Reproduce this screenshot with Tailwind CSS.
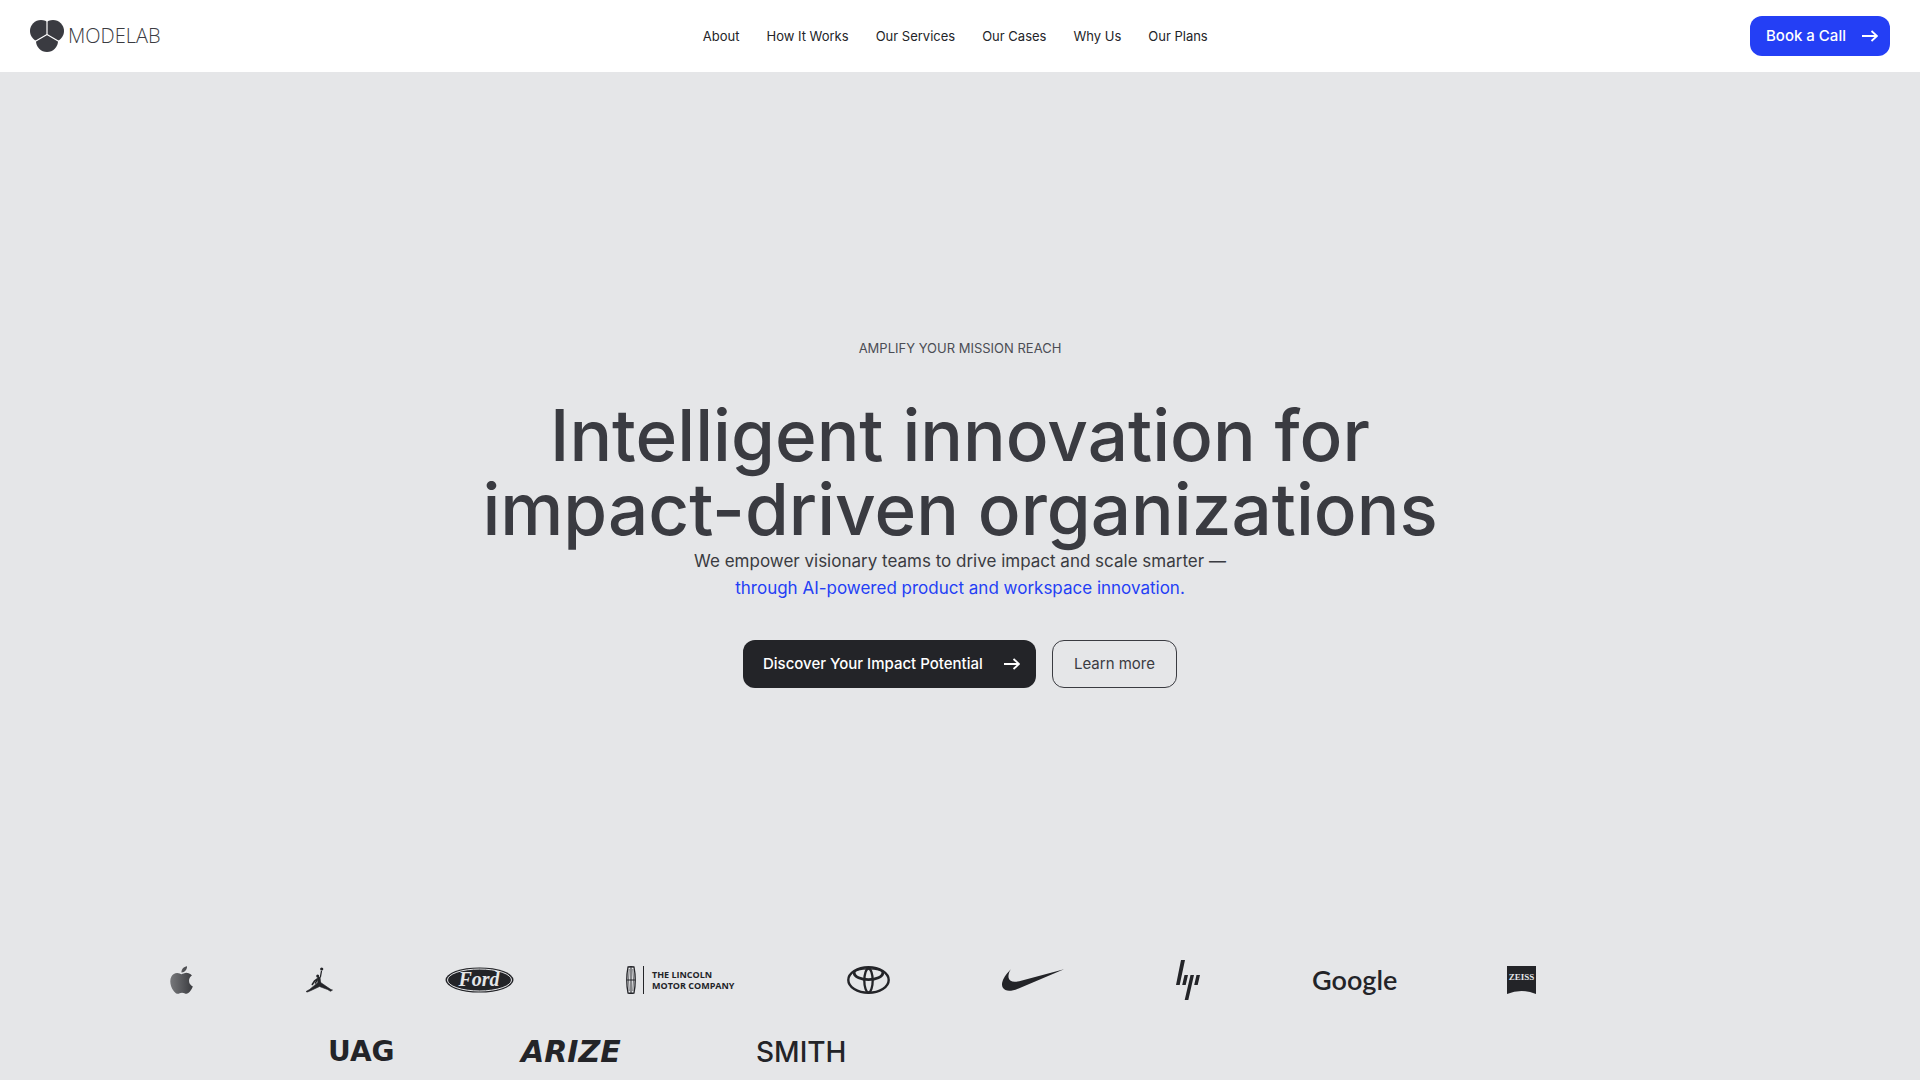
<!DOCTYPE html>
<html lang="en">
<head>
<meta charset="utf-8">
<meta name="viewport" content="width=device-width, initial-scale=1">
<title>Modelab</title>
<script src="https://cdn.jsdelivr.net/npm/@tailwindcss/browser@4"></script>
</head>
<body class="flex min-h-screen flex-col bg-[#e5e6e8] font-['Inter',sans-serif] text-[#232428]">

<header class="flex h-[72px] items-center justify-between bg-white px-[30px]">
  <a href="#" class="flex items-center gap-1 text-[#3a3b41]" aria-label="Modelab home">
    <svg class="h-8 w-[34px]" viewBox="0 0 34 32" fill="currentColor" aria-hidden="true">
      <circle cx="11" cy="11" r="11"/><circle cx="23" cy="11" r="11"/><circle cx="17" cy="21" r="11"/>
      <path d="M17 0V14.500M17 14.500L5 21.500M17 14.500L29 21.500" stroke="#fff" stroke-width="1.200" fill="none"/>
    </svg>
    <span class="font-['Open_Sans',sans-serif] text-[20px] leading-8 font-light">MODELAB</span>
  </a>
  <nav class="flex items-center gap-[27px] text-[13px] leading-5">
    <a href="#about">About</a>
    <a href="#how">How It Works</a>
    <a href="#services">Our Services</a>
    <a href="#cases">Our Cases</a>
    <a href="#why">Why Us</a>
    <a href="#plans">Our Plans</a>
  </nav>
  <button type="button" class="flex h-10 w-[140px] items-center justify-between rounded-xl bg-[#243ff5] pr-3 pl-4 text-[15px] font-medium text-white">
    Book a Call
    <svg class="h-3 w-4" viewBox="0 0 16 12" fill="none" stroke="currentColor" stroke-width="1.800" aria-hidden="true"><path d="M0 6H15M9.500 1L15 6L9.500 11"/></svg>
  </button>
</header>

<main class="flex flex-1 flex-col">
  <section class="flex flex-1 flex-col items-center justify-center text-center">
    <p class="text-[13px] leading-5 text-[#4b4d54]">AMPLIFY YOUR MISSION REACH</p>
    <h1 class="mt-10 text-[71px] leading-[74px] font-medium text-[#3a3b41]">Intelligent innovation for<br>impact-driven organizations</h1>
    <p class="mt-0.5 text-[17px] leading-[27px] text-[#3a3b41]">We empower visionary teams to drive impact and scale smarter —<br><span class="text-[#243ff5]">through AI-powered product and workspace innovation.</span></p>
    <div class="mt-[38px] flex gap-4 text-[15px]">
      <button type="button" class="flex h-12 w-[293px] items-center justify-between rounded-xl bg-[#232428] pr-4 pl-5 font-medium text-white">
        Discover Your Impact Potential
        <svg class="h-3 w-4" viewBox="0 0 16 12" fill="none" stroke="currentColor" stroke-width="1.800" aria-hidden="true"><path d="M0 6H15M9.500 1L15 6L9.500 11"/></svg>
      </button>
      <button type="button" class="h-12 w-[125px] rounded-xl border border-[#3a3b41] text-[#3a3b41]">Learn more</button>
    </div>
  </section>

  <section class="flex flex-col gap-8 pt-1.5 pb-2" aria-label="Clients">
    <div class="flex h-10 items-center gap-28 pl-[170px]">
      <svg class="h-7 w-[23px] shrink-0" viewBox="2 0 20 24" role="img" aria-label="Apple">
        <defs><linearGradient id="apple"><stop offset="0" stop-color="#77787b"/><stop offset="1" stop-color="#3a3b3f"/></linearGradient></defs>
        <path fill="url(#apple)" d="M12.152 6.896c-.948 0-2.415-1.078-3.960-1.040-2.040.027-3.910 1.183-4.961 3.014-2.117 3.675-.546 9.103 1.519 12.090 1.013 1.454 2.208 3.090 3.792 3.039 1.520-.065 2.090-.987 3.935-.987 1.831 0 2.350.987 3.960.948 1.637-.026 2.676-1.480 3.676-2.948 1.156-1.688 1.636-3.325 1.662-3.415-.039-.013-3.182-1.221-3.220-4.857-.026-3.040 2.480-4.494 2.597-4.559-1.429-2.090-3.623-2.324-4.390-2.376-2-.156-3.675 1.090-4.610 1.090zM15.530 3.830c.843-1.012 1.400-2.427 1.245-3.830-1.207.052-2.662.805-3.532 1.818-.780.896-1.454 2.338-1.273 3.714 1.338.104 2.715-.688 3.559-1.701"/>
      </svg>
      <svg class="h-[26px] w-7 shrink-0" viewBox="0 0 28 26" fill="none" stroke="currentColor" stroke-linecap="round" role="img" aria-label="Jordan">
        <circle cx="16.700" cy="2" r="1.600" fill="currentColor" stroke="none"/><circle cx="12.700" cy="9" r="1.500" fill="currentColor" stroke="none"/>
        <path stroke-width="1.300" d="M16.400 4.500L15.400 10"/><path stroke-width="3.400" d="M13.800 11.500L14.300 16.500"/>
        <path stroke-width="1.600" d="M12 12L9.500 14L7.300 17.500M12 13L10.500 16"/>
        <path fill="currentColor" stroke-width=".6" d="M12.500 16L16 15.700L23 20.600L26 22.600L27.500 23L25.500 24.300L22.500 22.500L14.500 19.500L6 23.500L2.500 25L1 24.600L4.500 22.500Z"/>
      </svg>
      <svg class="h-[26px] w-[69px] shrink-0" viewBox="0 0 69 26" role="img" aria-label="Ford">
        <ellipse cx="34.500" cy="13" rx="34" ry="12.600" fill="#232428"/>
        <ellipse cx="34.500" cy="13" rx="32" ry="11" fill="none" stroke="#e5e6e8"/>
        <text x="34" y="19" text-anchor="middle" font-family="Liberation Serif, serif" font-style="italic" font-weight="700" font-size="20" fill="#e5e6e8">Ford</text>
      </svg>
      <div class="flex w-[109px] shrink-0 items-center gap-2">
        <svg class="h-7 w-[18px] shrink-0" viewBox="0 0 18 28" fill="none" stroke="currentColor" role="img" aria-label="Lincoln">
          <path stroke-width="1.300" d="M2 1Q5 .5 8 1Q10.500 14 8 27Q5 27.500 2 27Q-.5 14 2 1Z"/><path d="M5 1V27M1 14H9"/><path stroke-width=".6" d="M3.200 3Q1.800 14 3.200 25M6.800 3Q8.200 14 6.800 25"/><path d="M17.500 0V28"/>
        </svg>
        <span class="font-['Open_Sans',sans-serif] text-[9px] leading-[11px] font-bold whitespace-nowrap">THE LINCOLN<br>MOTOR COMPANY</span>
      </div>
      <svg class="h-7 w-[43px] shrink-0" viewBox="0 0 43 28" fill="none" stroke="currentColor" role="img" aria-label="Toyota">
        <ellipse cx="21.500" cy="14" rx="20.200" ry="12.800" stroke-width="2.400"/><ellipse cx="21.500" cy="14.500" rx="4.200" ry="12" stroke-width="2.300"/><path stroke-width="2.800" d="M7.200 6.500C7 16 36 16 35.800 6.500"/><path stroke-width="1.400" d="M7.200 7C9 1.500 34 1.500 35.800 7"/>
      </svg>
      <svg class="h-[22px] w-[62px] shrink-0" viewBox="0 7.800 24 8.400" fill="currentColor" role="img" aria-label="Nike"><path d="M24 7.800L6.442 15.276c-1.456.616-2.679.925-3.668.925-1.120 0-1.933-.392-2.437-1.177-.317-.504-.410-1.143-.280-1.918.130-.775.476-1.600 1.036-2.478.467-.710 1.232-1.643 2.297-2.800a6.122 6.122 0 00-.784 1.848c-.280 1.195-.028 2.072.756 2.632.373.261.886.392 1.540.392.522 0 1.110-.084 1.764-.252L24 7.800z"/></svg>
      <svg class="h-10 w-6 shrink-0" viewBox="0 0 24 40" fill="currentColor" role="img" aria-label="HP"><path d="M5 0H9L3.700 25H0ZM8.500 15H12L9.700 25H6.200ZM14.500 15H18L12.300 40H8.700ZM20.500 15H24L21.700 25H18.200Z"/></svg>
      <span class="w-[83px] shrink-0 font-['Lato',sans-serif] text-[27px] leading-10 font-semibold">Google</span>
      <svg class="h-7 w-[29px] shrink-0" viewBox="0 0 29 28" role="img" aria-label="Zeiss"><path d="M0 0H29V28Q14.500 22 0 28Z" fill="#232428"/><text x="14.500" y="14" text-anchor="middle" font-family="Liberation Serif, serif" font-weight="700" font-size="9" fill="#e5e6e8">ZEISS</text></svg>
    </div>
    <div class="flex h-10 items-center pl-[328px] whitespace-nowrap">
      <span class="w-[193px] font-['DejaVu_Sans',sans-serif] text-[28px] leading-10 font-bold">UAG</span>
      <span class="w-[235px] font-['DejaVu_Sans',sans-serif] text-[30px] leading-10 font-bold italic">ARIZE</span>
      <span class="text-[28px] leading-10 font-medium">SMITH</span>
    </div>
  </section>
</main>
</body>
</html>
